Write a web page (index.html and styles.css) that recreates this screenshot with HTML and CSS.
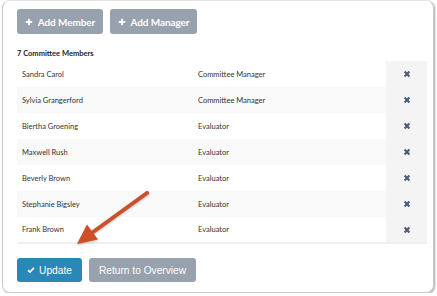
FILE: index.html
```html
<!DOCTYPE html>
<html lang="en">
<head>
    <meta charset="UTF-8">
    <title>Committee Members</title>
    <link rel="stylesheet" href="styles.css">
</head>
<body>
    <div class="panel">
        <div class="toolbar">
            <button class="btn btn-gray">
                <svg class="icon" viewBox="0 0 10 10"><path d="M5 1v8M1 5h8" stroke="#fff" stroke-width="2.2"/></svg>
                Add Member
            </button>
            <button class="btn btn-gray">
                <svg class="icon" viewBox="0 0 10 10"><path d="M5 1v8M1 5h8" stroke="#fff" stroke-width="2.2"/></svg>
                Add Manager
            </button>
        </div>

        <h4 class="count">7 Committee Members</h4>

        <table class="members">
            <tr><td class="name">Sandra Carol</td><td class="role">Committee Manager</td><td class="remove"><svg class="x" viewBox="0 0 10 10"><path d="M2 2l6 6M8 2l-6 6"/></svg></td></tr>
            <tr><td class="name">Sylvia Grangerford</td><td class="role">Committee Manager</td><td class="remove"><svg class="x" viewBox="0 0 10 10"><path d="M2 2l6 6M8 2l-6 6"/></svg></td></tr>
            <tr><td class="name">Biertha Groening</td><td class="role">Evaluator</td><td class="remove"><svg class="x" viewBox="0 0 10 10"><path d="M2 2l6 6M8 2l-6 6"/></svg></td></tr>
            <tr><td class="name">Maxwell Rush</td><td class="role">Evaluator</td><td class="remove"><svg class="x" viewBox="0 0 10 10"><path d="M2 2l6 6M8 2l-6 6"/></svg></td></tr>
            <tr><td class="name">Beverly Brown</td><td class="role">Evaluator</td><td class="remove"><svg class="x" viewBox="0 0 10 10"><path d="M2 2l6 6M8 2l-6 6"/></svg></td></tr>
            <tr><td class="name">Stephanie Bigsley</td><td class="role">Evaluator</td><td class="remove"><svg class="x" viewBox="0 0 10 10"><path d="M2 2l6 6M8 2l-6 6"/></svg></td></tr>
            <tr><td class="name">Frank Brown</td><td class="role">Evaluator</td><td class="remove"><svg class="x" viewBox="0 0 10 10"><path d="M2 2l6 6M8 2l-6 6"/></svg></td></tr>
        </table>

        <div class="actions">
            <button class="btn btn-blue">
                <svg class="icon check" viewBox="0 0 10 10"><path d="M1.3 5.2l2.4 2.4 5-5.2" stroke="#fff" stroke-width="2" fill="none"/></svg>
                Update
            </button>
            <button class="btn btn-gray btn-plain">Return to Overview</button>
        </div>

        <!-- annotation arrow -->
        <svg class="arrow" width="437" height="296" viewBox="0 0 437 296">
            <line x1="147" y1="193" x2="91" y2="233.5" stroke="#cd4f27" stroke-width="4" stroke-linecap="round"/>
            <polygon points="77,244 98,239.5 87,224.5" fill="#cd4f27"/>
        </svg>
    </div>
</body>
</html>
```

FILE: styles.css
```css
* {
    margin: 0;
    padding: 0;
    box-sizing: border-box;
}

body {
    background: #fff;
    font-family: 'Lato', 'Liberation Sans', sans-serif;
    color: #333;
}

.panel {
    position: relative;
    width: 432px;
    height: 293px;
    margin-left: 2px;
    padding: 8px 8px 0 14px;
    border: 1px solid #c8c8c8;
    border-top-color: #e4e4e4;
    border-radius: 8px;
    box-shadow: 1px 1px 2px rgba(0, 0, 0, 0.35);
}

.toolbar {
    display: flex;
    gap: 7px;
}

.btn {
    display: flex;
    align-items: center;
    justify-content: center;
    gap: 5px;
    height: 25px;
    border: none;
    border-radius: 3px;
    color: #fff;
    font-family: 'Lato', sans-serif;
    font-size: 10px;
}

.toolbar .btn {
    font-weight: 700;
    letter-spacing: -0.1px;
}

.btn-gray {
    background: #98a1ae;
    width: 86px;
}

.toolbar .btn:nth-child(2) {
    width: 87px;
}

.icon {
    width: 8px;
    height: 8px;
}

.count {
    margin-top: 15px;
    font-size: 7.5px;
    font-weight: 700;
    color: #222;
    line-height: 9px;
}

.members {
    width: 410px;
    margin-top: 3px;
    border-collapse: collapse;
    font-size: 7.5px;
    color: #333;
    border-bottom: 2px solid #f0f0f0;
}

.members tr:nth-child(even) {
    background: #f9f9f9;
}

.members td {
    height: 26px;
    padding: 0 5px;
    vertical-align: middle;
}

.name {
    width: 176px;
}

.remove {
    width: 41px;
    background: #f4f4f4;
    text-align: center;
}

.x {
    width: 8px;
    height: 8px;
    display: block;
    margin: 0 auto;
    stroke: #4c5a78;
    stroke-width: 2.6;
}

.actions {
    display: flex;
    gap: 7px;
    margin-top: 14px;
}

.actions .btn {
    height: 24px;
    font-family: 'Liberation Sans', Arial, sans-serif;
    font-size: 10.2px;
}

.btn-blue {
    background: #2a88b9;
    width: 65px;
    gap: 4px;
}

.check {
    width: 8px;
    height: 8px;
}

.btn-plain {
    width: 107px;
}

.arrow {
    position: absolute;
    left: -3px;
    top: -1px;
    pointer-events: none;
    filter: drop-shadow(0 1px 1px rgba(0, 0, 0, 0.25));
}
```
